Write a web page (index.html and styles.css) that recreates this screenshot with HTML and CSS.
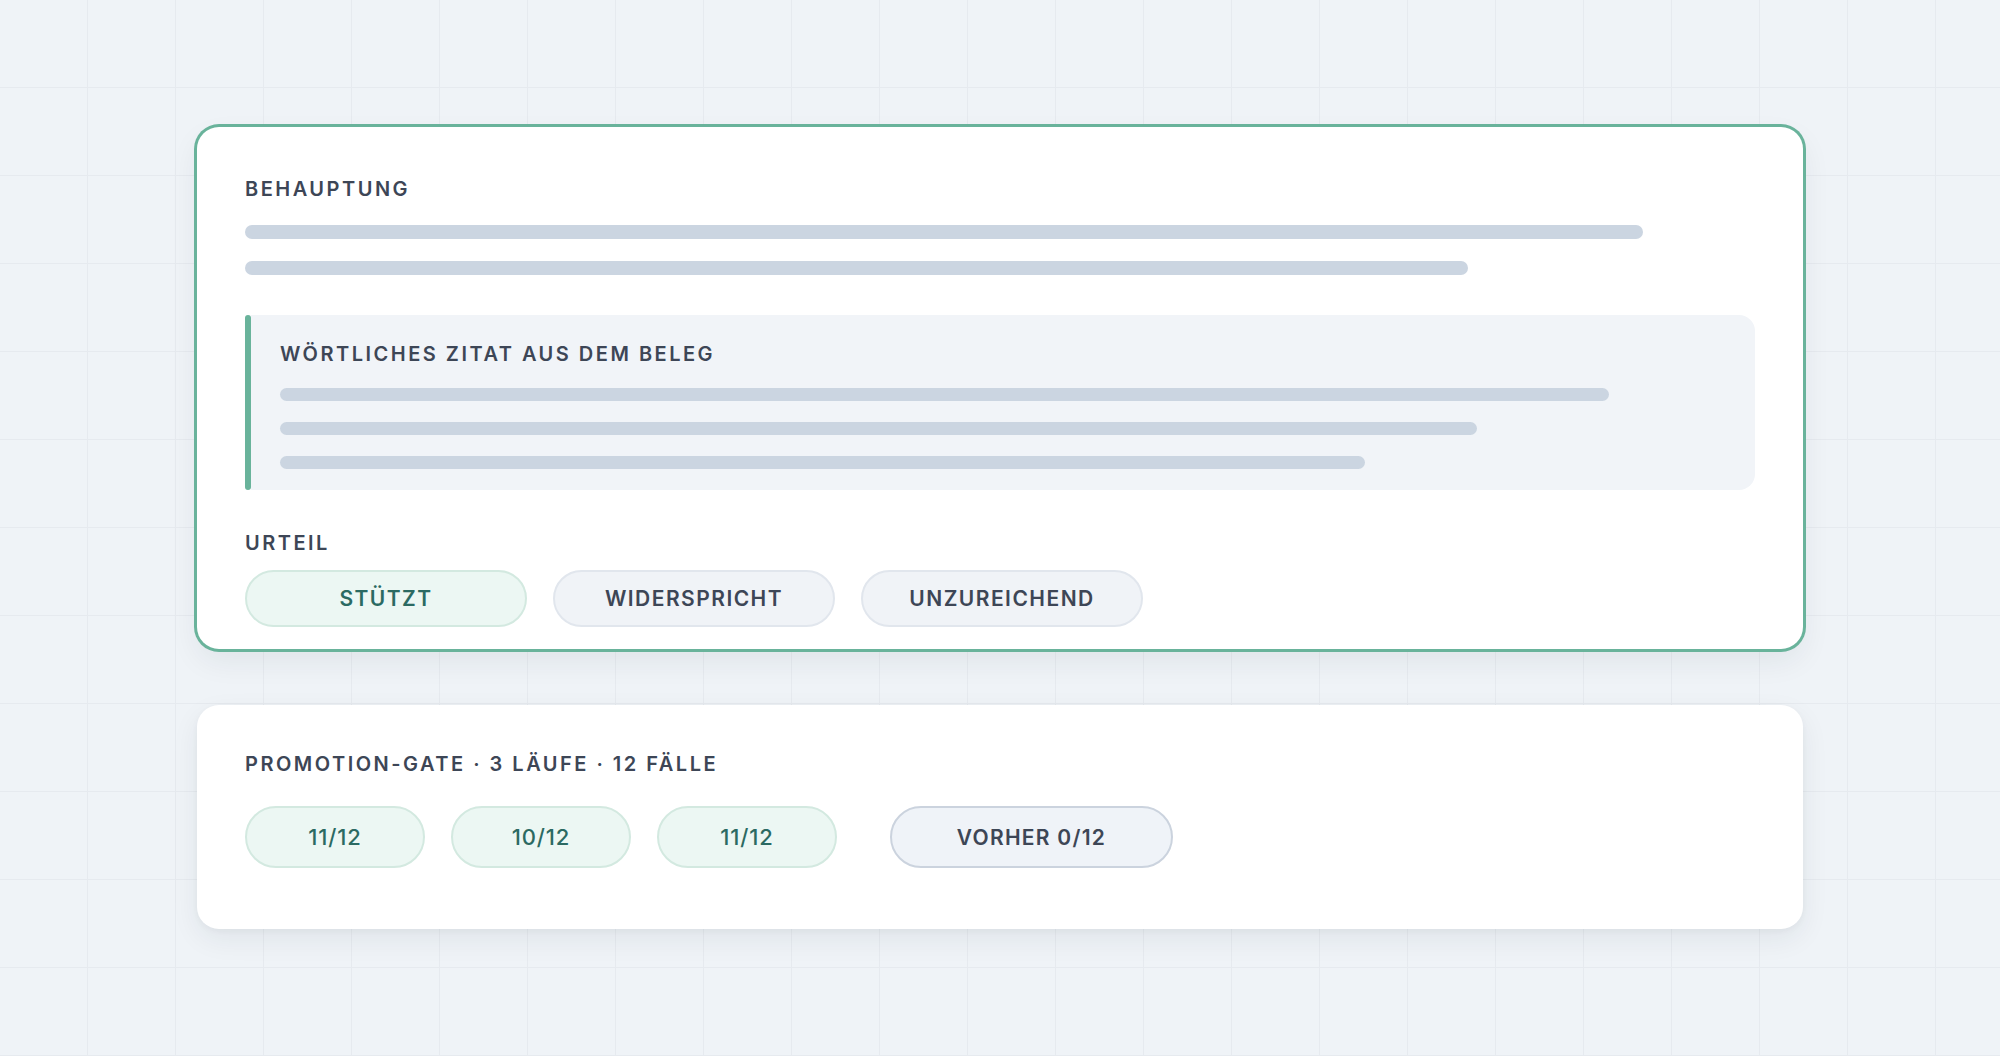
FILE: index.html
```html
<!DOCTYPE html>
<html lang="de">
<head>
<meta charset="utf-8">
<title>Beleg-Prüfung</title>
<link rel="stylesheet" href="styles.css">
</head>
<body>
<main class="stage">
  <section class="card card--active">
    <h2 class="label">Behauptung</h2>
    <div class="lines lines--claim">
      <span class="line w-93"></span>
      <span class="line w-81"></span>
    </div>

    <blockquote class="quote">
      <span class="quote-rule"></span>
      <div class="quote-body">
        <h3 class="label">Wörtliches Zitat aus dem Beleg</h3>
        <div class="lines lines--quote">
          <span class="line line--thin w-92"></span>
          <span class="line line--thin w-83"></span>
          <span class="line line--thin w-75"></span>
        </div>
      </div>
    </blockquote>

    <h2 class="label label--verdict">Urteil</h2>
    <div class="choices">
      <button class="chip chip--ok">Stützt</button>
      <button class="chip">Widerspricht</button>
      <button class="chip">Unzureichend</button>
    </div>
  </section>

  <section class="card card--gate">
    <h2 class="label">Promotion-Gate · 3 Läufe · 12 Fälle</h2>
    <div class="runs">
      <span class="pill pill--ok">11/12</span>
      <span class="pill pill--ok">10/12</span>
      <span class="pill pill--ok">11/12</span>
      <span class="pill pill--before">Vorher 0/12</span>
    </div>
  </section>
</main>
</body>
</html>
```

FILE: styles.css
```css
* { box-sizing: border-box; }

html, body {
  margin: 0;
  height: 100%;
}

body {
  font-family: Inter, "Noto Sans", "Liberation Sans", sans-serif;
  color: #3d4656;
  background-color: #eff3f7;
  background-image:
    linear-gradient(to right, #e6eaef 1px, transparent 1px),
    linear-gradient(to bottom, #e6eaef 1px, transparent 1px);
  background-size: 88px 88px;
  background-position: -1px -1px;
}

.stage {
  width: 1606px;
  margin: 0 auto;
  padding-top: 127px;
  display: flex;
  flex-direction: column;
  gap: 56px;
}

.card {
  background: #ffffff;
  border-radius: 22px;
  padding: 48px 48px 22px;
  box-shadow: 0 10px 28px rgba(30, 41, 59, 0.07), 0 2px 6px rgba(30, 41, 59, 0.04);
}

.card--active {
  box-shadow: 0 0 0 3px #69b39b, 0 12px 30px rgba(30, 41, 59, 0.07);
}

.card--gate {
  padding: 45px 48px 61px;
}

.label {
  margin: 0;
  font-size: 20px;
  line-height: 28px;
  font-weight: 600;
  letter-spacing: 0.125em;
  text-transform: uppercase;
  color: #3d4656;
}

/* placeholder text lines */
.lines {
  display: flex;
  flex-direction: column;
}

.lines--claim {
  margin-top: 22px;
  gap: 22px;
}

.lines--quote {
  margin-top: 20px;
  gap: 21px;
}

.line {
  display: block;
  height: 14px;
  border-radius: 7px;
  background: #cbd5e1;
}

.line--thin {
  height: 13px;
}

.w-93 { width: 92.6%; }
.w-81 { width: 81%; }
.w-92 { width: 91.9%; }
.w-83 { width: 82.8%; }
.w-75 { width: 75%; }

/* quoted evidence */
.quote {
  margin: 40px 0 0;
  display: flex;
}

.quote-rule {
  flex: 0 0 6px;
  border-radius: 3px;
  background: #69b39b;
}

.quote-body {
  flex: 1;
  background: #f1f4f8;
  border-radius: 0 16px 16px 0;
  padding: 25px 29px 21px 29px;
}

.label--verdict {
  margin-top: 39px;
}

.choices {
  margin-top: 13px;
  display: flex;
  gap: 26px;
}

.chip {
  width: 282px;
  height: 57px;
  border-radius: 29px;
  border: 2px solid #e1e6ed;
  background: #f0f3f7;
  font-family: inherit;
  font-size: 21px;
  font-weight: 600;
  letter-spacing: 0.07em;
  text-transform: uppercase;
  color: #3d4656;
  padding: 0;
}

.chip--ok {
  background: #ecf7f3;
  border-color: #d3e9e0;
  color: #2b6a62;
}

/* gate results */
.runs {
  margin-top: 28px;
  display: flex;
  gap: 26px;
}

.pill {
  display: flex;
  align-items: center;
  justify-content: center;
  height: 62px;
  border-radius: 31px;
  font-size: 22px;
  font-weight: 500;
  letter-spacing: 0.04em;
  text-transform: uppercase;
}

.pill--ok {
  width: 180px;
  background: #ecf7f3;
  border: 2px solid #d3e9e0;
  color: #2b6a62;
}

.pill--before {
  width: 283px;
  margin-left: 27px;
  background: #eff3f8;
  border: 2px solid #cbd3de;
  color: #3d4656;
  font-weight: 600;
  font-size: 21px;
  letter-spacing: 0.06em;
}
```
